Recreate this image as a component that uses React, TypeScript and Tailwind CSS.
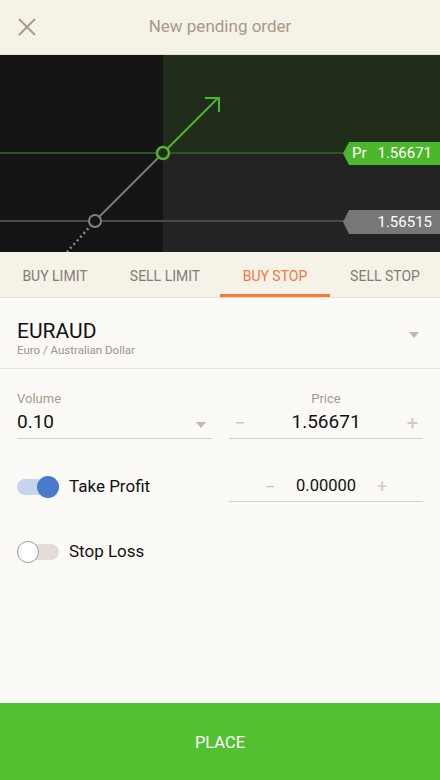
import { useState } from "react";

const tabs = ["BUY LIMIT", "SELL LIMIT", "BUY STOP", "SELL STOP"];

function Caret({ className }: { className?: string }) {
  return (
    <svg width="10" height="6" viewBox="0 0 10 6" className={className}>
      <path d="M0 0 H10 L5 6 Z" fill="#c2b6a8" />
    </svg>
  );
}

function Toggle({ on }: { on: boolean }) {
  return (
    <div className="relative w-[42px] h-[22px] flex items-center">
      <div
        className={`w-[42px] h-[16px] rounded-full ${on ? "bg-[#c6d4ec]" : "bg-[#e4ddd7]"}`}
      />
      {on ? (
        <div className="absolute right-0 w-[22px] h-[22px] rounded-full bg-[#4a7bcd]" />
      ) : (
        <div className="absolute left-0 w-[22px] h-[22px] rounded-full bg-white border border-[#a8988a]" />
      )}
    </div>
  );
}

function Chart() {
  return (
    <div className="relative h-[197px] bg-[#141414] overflow-hidden">
      <svg width="440" height="197" viewBox="0 0 440 197" className="absolute inset-0">
        {/* zones */}
        <rect x="163" y="0" width="277" height="98" fill="#1f2d1a" />
        <rect x="163" y="98" width="277" height="99" fill="#232323" />
        {/* levels */}
        <line x1="0" y1="98" x2="345" y2="98" stroke="#2e5423" strokeWidth="2" />
        <line x1="0" y1="166" x2="345" y2="166" stroke="#4a4a4a" strokeWidth="2" />
        {/* path */}
        <line x1="95" y1="166" x2="67" y2="197" stroke="#8a8a8a" strokeWidth="2.5" strokeDasharray="2 3" />
        <line x1="95" y1="166" x2="163" y2="98" stroke="#7a7a7a" strokeWidth="2" />
        <line x1="163" y1="98" x2="218" y2="43" stroke="#4cb62d" strokeWidth="2" />
        <path d="M205 43 H219 V57" fill="none" stroke="#4cb62d" strokeWidth="2" />
        <circle cx="95" cy="166" r="6" fill="#141414" stroke="#808080" strokeWidth="2" />
        <circle cx="163" cy="98" r="6" fill="#1f2d1a" stroke="#4cb62d" strokeWidth="2.5" />
        {/* tags */}
        <path d="M349 87 H440 V110 H349 L343 98.5 Z" fill="#4cb62d" />
        <path d="M349 155 H440 V179 H349 L343 167 Z" fill="#777777" />
      </svg>
      <div className="absolute left-[352px] top-[87px] h-[23px] w-[80px] flex items-center justify-between text-white text-[15px]">
        <span>Pr</span>
        <span>1.56671</span>
      </div>
      <div className="absolute right-[8px] top-[155px] h-[24px] flex items-center text-white text-[15px]">
        1.56515
      </div>
    </div>
  );
}

export default function App() {
  const [active, setActive] = useState(2);

  return (
    <div
      className="w-[440px] h-[780px] flex flex-col bg-[#fcfaf6] overflow-hidden"
      style={{ fontFamily: "Roboto, 'Liberation Sans', sans-serif" }}
    >
      {/* Header */}
      <div className="relative h-[55px] flex items-center justify-center bg-[#f5f2e7] border-b border-[#e6dfd0]">
        <button className="absolute left-[17px] top-[17px] w-[20px] h-[20px] flex items-center justify-center">
          <svg width="20" height="20" viewBox="0 0 20 20">
            <path d="M2 2 L18 18 M18 2 L2 18" stroke="#a8988a" strokeWidth="1.8" />
          </svg>
        </button>
        <span className="text-[17px] text-[#a8998a]">New pending order</span>
      </div>

      <Chart />

      {/* Tabs */}
      <div className="grid grid-cols-4 h-[46px] bg-[#f5f2e7] border-b border-[#e8e0d2]">
        {tabs.map((t, i) => (
          <button
            key={t}
            onClick={() => setActive(i)}
            className={`relative flex items-center justify-center pt-[3px] text-[14px] ${
              i === active ? "text-[#f8773a]" : "text-[#857b73]"
            }`}
          >
            {t}
            {i === active && (
              <span className="absolute left-0 right-0 bottom-0 h-[3px] bg-[#ff7a30]" />
            )}
          </button>
        ))}
      </div>

      {/* Body */}
      <div className="flex-1 flex flex-col">
        <div className="h-[71px] px-[17px] flex items-center justify-between border-b border-[#ebe5dc]">
          <div className="flex flex-col pt-[10px]">
            <span className="text-[21px] leading-[24px] text-[#111]">EURAUD</span>
            <span className="text-[11.5px] leading-[15px] text-[#a0928a]">Euro / Australian Dollar</span>
          </div>
          <Caret className="mr-[4px] mt-[4px]" />
        </div>

        <div className="px-[17px] pt-[22px] flex gap-[17px]">
          <div className="w-[195px] flex flex-col">
            <span className="text-[13px] leading-[16px] text-[#a69a8e]">Volume</span>
            <div className="h-[32px] flex items-center justify-between border-b border-[#d6cdc4]">
              <span className="text-[19px] text-[#111]">0.10</span>
              <Caret className="mr-[6px] mt-[4px]" />
            </div>
          </div>
          <div className="flex-1 flex flex-col">
            <span className="text-[13px] leading-[16px] text-[#a69a8e] text-center">Price</span>
            <div className="h-[32px] flex items-center justify-between border-b border-[#d6cdc4] px-[5px]">
              <span className="text-[20px] text-[#cfc7bf] leading-none">−</span>
              <span className="text-[19px] text-[#111]">1.56671</span>
              <span className="text-[20px] text-[#cfc7bf] leading-none">+</span>
            </div>
          </div>
        </div>

        <div className="px-[17px] mt-[33px] flex items-center gap-[17px]">
          <div className="w-[195px] flex items-center gap-[10px]">
            <Toggle on />
            <span className="text-[17px] text-[#111]">Take Profit</span>
          </div>
          <div className="flex-1 h-[28px] mt-[2px] flex items-center justify-center gap-[21px] border-b border-[#d6cdc4] pb-[2px]">
            <span className="text-[18px] text-[#cfc7bf] leading-none">−</span>
            <span className="text-[16.5px] text-[#111]">0.00000</span>
            <span className="text-[18px] text-[#cfc7bf] leading-none">+</span>
          </div>
        </div>

        <div className="px-[17px] mt-[37px] flex items-center gap-[10px]">
          <Toggle on={false} />
          <span className="text-[17px] text-[#111]">Stop Loss</span>
        </div>
      </div>

      {/* Place */}
      <button className="h-[77px] bg-[#52c031] text-white text-[16.5px] flex items-center justify-center pt-[3px]">
        PLACE
      </button>
    </div>
  );
}
